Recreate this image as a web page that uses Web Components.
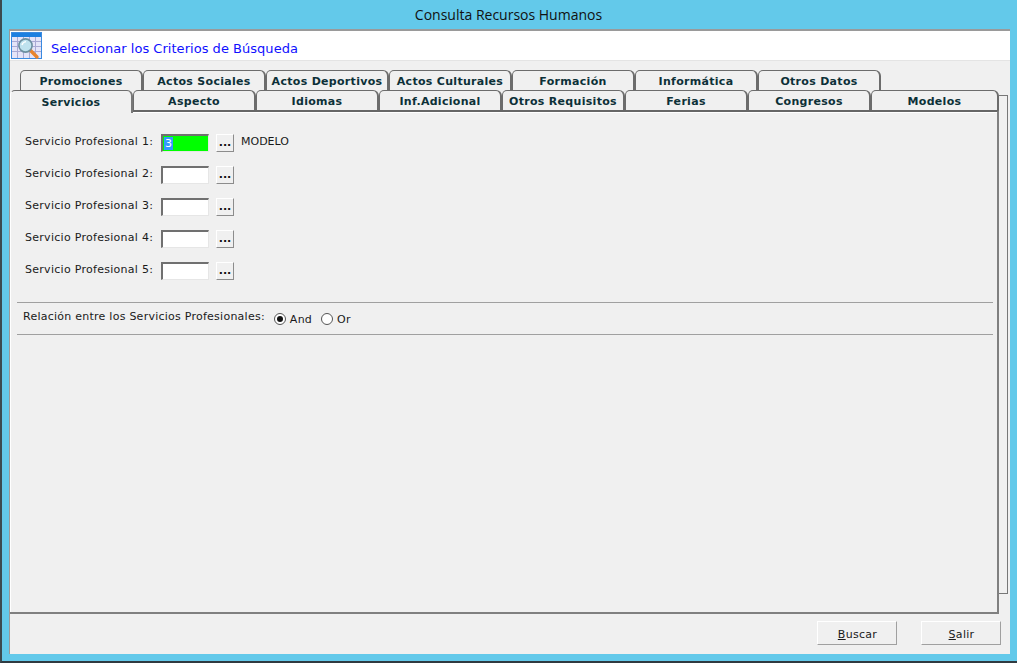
<!DOCTYPE html>
<html lang="es">
<head>
<meta charset="utf-8">
<title>Consulta Recursos Humanos</title>
<style>
  html, body { margin: 0; height: 100%; overflow: hidden; background: #63c9ea; }
  body { font: 11px "DejaVu Sans", sans-serif; color: #1a1a1a; }
</style>
</head>
<body>
<rrhh-window heading="Consulta Recursos Humanos">
  <form-header slot="header">Seleccionar los Criterios de Búsqueda</form-header>
  <tab-row slot="back" offset="10">
    <tab-item>Promociones</tab-item>
    <tab-item>Actos Sociales</tab-item>
    <tab-item>Actos Deportivos</tab-item>
    <tab-item>Actos Culturales</tab-item>
    <tab-item>Formación</tab-item>
    <tab-item>Informática</tab-item>
    <tab-item>Otros Datos</tab-item>
  </tab-row>
  <tab-row slot="front" offset="0">
    <tab-item selected>Servicios</tab-item>
    <tab-item>Aspecto</tab-item>
    <tab-item>Idiomas</tab-item>
    <tab-item>Inf.Adicional</tab-item>
    <tab-item>Otros Requisitos</tab-item>
    <tab-item>Ferias</tab-item>
    <tab-item>Congresos</tab-item>
    <tab-item last>Modelos</tab-item>
  </tab-row>
  <service-row label="Servicio Profesional 1:" value="3" result="MODELO"></service-row>
  <service-row label="Servicio Profesional 2:"></service-row>
  <service-row label="Servicio Profesional 3:"></service-row>
  <service-row label="Servicio Profesional 4:"></service-row>
  <service-row label="Servicio Profesional 5:"></service-row>
  <relation-bar slot="relation"></relation-bar>
  <action-button slot="actions" key="B" rest="uscar"></action-button>
  <action-button slot="actions" key="S" rest="alir"></action-button>
</rrhh-window>

<script>
class RrhhWindow extends HTMLElement {
  constructor() {
    super();
    this.attachShadow({ mode: "open" });
    this.shadowRoot.innerHTML = `
      <style>
        :host { display: flex; flex-direction: column; box-sizing: border-box; width: 1017px; height: 663px;
                border-left: 2px solid #3c4a50; border-bottom: 2px solid #2f3a40; background: #63c9ea; }
        .title { height: 29px; flex: none; text-align: center; color: #111;
                 font: 14px/30px "Open Sans", sans-serif; padding-right: 2px; }
        .client { flex: none; margin-left: 7px; width: 1001px; height: 625px; box-sizing: border-box;
                  border-top: 2px solid #9a9a9a; border-left: 1px solid #9a9a9a; background: #f0f0f0;
                  display: flex; flex-direction: column; }
        .tabs { flex: none; display: flex; margin-top: 9px; height: 543px; }
        .book { width: 989px; flex: none; display: flex; flex-direction: column; }
        .strip { width: 9px; flex: none; margin-top: 25px; height: 499px; box-sizing: border-box;
                 border: 1px solid #777; border-left: 0; background: #f0f0f0; }
        .pane { flex: none; height: 504px; box-sizing: border-box;
                border-top: 2px solid #666; border-right: 2px solid #808080; border-bottom: 2px solid #808080;
                box-shadow: inset 1px 1px 0 #fff; padding: 19px 0 0 15px; }
        .fields { display: flex; flex-direction: column; gap: 8px; }
        .actions { display: flex; justify-content: flex-end; gap: 24px; padding: 8px 9px 0 0; }
      </style>
      <div class="title"></div>
      <div class="client">
        <slot name="header"></slot>
        <div class="tabs">
          <div class="book">
            <slot name="back"></slot>
            <slot name="front"></slot>
            <div class="pane">
              <div class="fields"><slot></slot></div>
              <slot name="relation"></slot>
            </div>
          </div>
          <div class="strip"></div>
        </div>
        <div class="actions"><slot name="actions"></slot></div>
      </div>`;
  }
  connectedCallback() {
    this.shadowRoot.querySelector(".title").textContent = this.getAttribute("heading");
  }
}

class FormHeader extends HTMLElement {
  constructor() {
    super();
    this.attachShadow({ mode: "open" });
    this.shadowRoot.innerHTML = `
      <style>
        :host { display: flex; align-items: center; height: 30px; background: #fff; color: #1010ff;
                font: 13px "DejaVu Sans", sans-serif; border-bottom: 1px solid #e4e4e4; box-sizing: border-box; }
        svg { width: 32px; height: 29px; margin: 0 8px 0 1px; flex: none; }
        span { padding-top: 5px; letter-spacing: .03px; }
      </style>
      <svg viewBox="0 0 32 29">
        <rect x=".5" y="1.5" width="30" height="26" fill="#e4e4f8" stroke="#3a8ae0"/>
        <rect x="1" y="2" width="29" height="4" fill="#1c7fe0"/>
        <path d="M1 10.5H30M1 15.5H30M1 20.5H30M6.5 6V27M12.5 6V27M18.5 6V27M24.5 6V27" stroke="#a9a9d4" fill="none"/>
        <path d="M19 19l7 7" stroke="#e8842c" stroke-width="3.4" stroke-linecap="round"/>
        <circle cx="14.5" cy="14.5" r="6.6" fill="#bfe2ee" stroke="#6d8fa0" stroke-width="1.6"/>
        <path d="M11 14c.5-2 2-3.2 4-3.4" stroke="#fff" stroke-width="1.4" fill="none"/>
      </svg>
      <span><slot></slot></span>`;
  }
}

class TabRow extends HTMLElement {
  constructor() {
    super();
    this.attachShadow({ mode: "open" });
    this.shadowRoot.innerHTML = `
      <style>
        :host { display: flex; height: 20px; flex: none; position: relative; }
        :host([offset="10"]) { padding-left: 10px; }
      </style>
      <slot></slot>`;
  }
}

class TabItem extends HTMLElement {
  constructor() {
    super();
    this.attachShadow({ mode: "open" });
    this.shadowRoot.innerHTML = `
      <style>
        :host { display: block; flex: none; box-sizing: border-box; width: 123px; height: 20px;
                border: 2px solid #6c6c6c; border-width: 1px 2px 0 1px; border-radius: 5px 6px 0 0;
                text-align: center; font: bold 11px/21px "DejaVu Sans", sans-serif; letter-spacing: .3px;
                color: #0d3038; background: #f0f0f0; }
        :host([selected]) { position: relative; z-index: 2; height: 23px; margin-bottom: -3px; line-height: 23px;
                            border-left-color: #fff; border-right-color: #777; }
        :host([last]) { width: 128px; }
      </style>
      <slot></slot>`;
  }
}

class LookupField extends HTMLElement {
  static get observedAttributes() { return ["value"]; }
  constructor() {
    super();
    this.attachShadow({ mode: "open" });
    this.shadowRoot.innerHTML = `
      <style>
        :host { display: flex; align-items: center; gap: 7px; }
        .box { width: 48px; height: 18px; box-sizing: border-box; background: #fff; font-size: 11px; line-height: 14px;
               border: 1px solid #e6e6e6; border-top: 2px solid #707070; border-left: 2px solid #707070; padding: 1px 0 0 1px; }
        :host([value]) .box { background: #00ff00; }
        mark { display: inline-block; background: #3399ff; color: #fff; padding: 0 1px; height: 13px; }
        button { width: 18px; height: 18px; padding: 0; box-sizing: border-box; background: #f0f0f0; color: #111;
                 border: 1px solid; border-color: #fff #8c8c8c #8c8c8c #fff; font: bold 11px/12px "DejaVu Sans", sans-serif; }
      </style>
      <div class="box"></div>
      <button type="button">...</button>`;
  }
  attributeChangedCallback(name, old, value) {
    const mark = document.createElement("mark");
    mark.textContent = value;
    this.shadowRoot.querySelector(".box").replaceChildren(mark);
  }
}

class ServiceRow extends HTMLElement {
  constructor() {
    super();
    this.attachShadow({ mode: "open" });
    this.shadowRoot.innerHTML = `
      <style>
        :host { display: flex; align-items: center; height: 24px; font-size: 11px; color: #1a1a1a; letter-spacing: .28px; }
        label { width: 136px; flex: none; padding-bottom: 3px; }
        .result { margin-left: 7px; padding-bottom: 3px; letter-spacing: 0; }
      </style>
      <label></label>
      <lookup-field></lookup-field>
      <span class="result"></span>`;
  }
  connectedCallback() {
    const root = this.shadowRoot;
    root.querySelector("label").textContent = this.getAttribute("label");
    root.querySelector(".result").textContent = this.getAttribute("result") || "";
    if (this.hasAttribute("value")) root.querySelector("lookup-field").setAttribute("value", this.getAttribute("value"));
  }
}

class RadioOption extends HTMLElement {
  constructor() {
    super();
    this.attachShadow({ mode: "open" });
    this.shadowRoot.innerHTML = `
      <style>
        :host { display: inline-flex; align-items: center; gap: 4px; }
        i { width: 10px; height: 10px; border: 1px solid #555; border-radius: 50%; background: #fff; display: block; position: relative; }
        :host([checked]) i::after { content: ""; position: absolute; inset: 2px; border-radius: 50%; background: #111; }
        span { padding-top: 2px; }
      </style>
      <i></i><span><slot></slot></span>`;
  }
}

class RelationBar extends HTMLElement {
  constructor() {
    super();
    this.attachShadow({ mode: "open" });
    this.shadowRoot.innerHTML = `
      <style>
        :host { display: flex; align-items: center; gap: 9px; box-sizing: border-box; width: 976px; height: 33px;
                margin: 19px 0 0 -8px; padding-left: 6px; border-top: 1px solid #a0a0a0; border-bottom: 1px solid #a0a0a0;
                font-size: 11px; color: #1a1a1a; letter-spacing: .25px; }
        .lead { padding-bottom: 4px; }
      </style>
      <span class="lead">Relación entre los Servicios Profesionales:</span>
      <radio-option checked>And</radio-option>
      <radio-option>Or</radio-option>`;
  }
}

class ActionButton extends HTMLElement {
  constructor() {
    super();
    this.attachShadow({ mode: "open" });
    this.shadowRoot.innerHTML = `
      <style>
        :host { display: block; }
        button { display: block; width: 80px; height: 24px; padding: 2px 0 0 1px; box-sizing: border-box; background: #f0f0f0;
                 color: #1a1a1a; border: 1px solid; border-color: #fff #a0a0a0 #a0a0a0 #fff;
                 font: 11px "DejaVu Sans", sans-serif; letter-spacing: .3px; }
        u { text-decoration: underline; }
      </style>
      <button type="button"><u></u><span></span></button>`;
  }
  connectedCallback() {
    this.shadowRoot.querySelector("u").textContent = this.getAttribute("key");
    this.shadowRoot.querySelector("span").textContent = this.getAttribute("rest");
  }
}

customElements.define("rrhh-window", RrhhWindow);
customElements.define("form-header", FormHeader);
customElements.define("tab-row", TabRow);
customElements.define("tab-item", TabItem);
customElements.define("lookup-field", LookupField);
customElements.define("service-row", ServiceRow);
customElements.define("radio-option", RadioOption);
customElements.define("relation-bar", RelationBar);
customElements.define("action-button", ActionButton);
</script>
</body>
</html>
